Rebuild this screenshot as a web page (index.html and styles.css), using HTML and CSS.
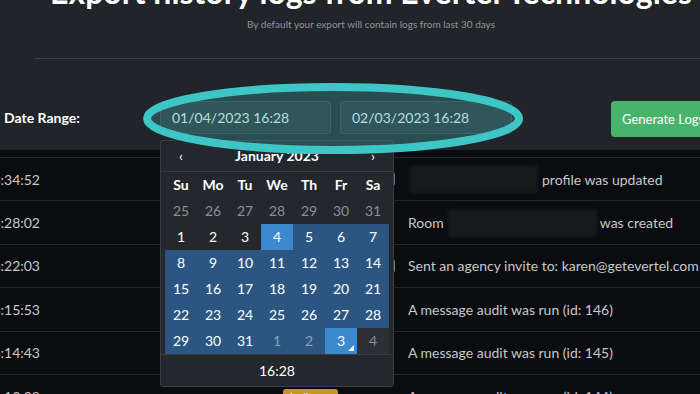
FILE: index.html
```html
<!DOCTYPE html>
<html lang="en">
<head>
    <meta charset="UTF-8">
    <meta name="viewport" content="width=device-width, initial-scale=1.0">
    <title>Export History Logs</title>
    <link rel="stylesheet" href="styles.css">
</head>
<body>
    <div class="page">
        <header class="top">
            <div class="intro">
                <h1>Export history logs from Evertel Technologies</h1>
                <p class="subtitle">By default your export will contain logs from last 30 days</p>
            </div>
            <div class="range-row">
                <span class="range-label">Date Range:</span>
                <div class="date-input">01/04/2023 16:28</div>
                <div class="date-input date-end">02/03/2023 16:28</div>
                <button class="generate">Generate Logs</button>
            </div>
        </header>

        <div class="logs">
            <div class="log-row">
                <div class="log-time"><span>16:34:52</span></div>
                <div class="log-type"><span class="badge badge-wide badge-grey">Profile updated</span></div>
                <div class="log-text"><span class="blur blur-name"></span>profile was updated</div>
            </div>
            <div class="log-row">
                <div class="log-time"><span>16:28:02</span></div>
                <div class="log-type"><span class="badge badge-grey">Room</span></div>
                <div class="log-text">Room<span class="blur blur-room"></span>was created</div>
            </div>
            <div class="log-row">
                <div class="log-time"><span>16:22:03</span></div>
                <div class="log-type"><span class="badge badge-wide badge-green">Agency invite sent</span></div>
                <div class="log-text">Sent an agency invite to: karen@getevertel.com</div>
            </div>
            <div class="log-row">
                <div class="log-time"><span>16:15:53</span></div>
                <div class="log-type"><span class="badge badge-gold">Audit</span></div>
                <div class="log-text">A message audit was run (id: 146)</div>
            </div>
            <div class="log-row">
                <div class="log-time"><span>16:14:43</span></div>
                <div class="log-type"><span class="badge badge-gold">Audit</span></div>
                <div class="log-text">A message audit was run (id: 145)</div>
            </div>
            <div class="log-row">
                <div class="log-time"><span>16:13:08</span></div>
                <div class="log-type"><span class="badge badge-gold">Audit</span></div>
                <div class="log-text">A message audit was run (id: 144)</div>
            </div>
        </div>

        <!-- date range picker, open on the start date -->
        <div class="picker">
            <div class="cal-grid picker-head">
                <span>&lsaquo;</span>
                <span class="month">January 2023</span>
                <span>&rsaquo;</span>
            </div>
            <div class="cal-grid">
                <span class="dow">Su</span><span class="dow">Mo</span><span class="dow">Tu</span><span class="dow">We</span><span class="dow">Th</span><span class="dow">Fr</span><span class="dow">Sa</span>

                <span class="day other">25</span><span class="day other">26</span><span class="day other">27</span><span class="day other">28</span><span class="day other">29</span><span class="day other">30</span><span class="day other">31</span>

                <span class="day">1</span><span class="day">2</span><span class="day">3</span><span class="day edge">4</span><span class="day in-range">5</span><span class="day in-range">6</span><span class="day in-range">7</span>

                <span class="day in-range">8</span><span class="day in-range">9</span><span class="day in-range">10</span><span class="day in-range">11</span><span class="day in-range">12</span><span class="day in-range">13</span><span class="day in-range">14</span>

                <span class="day in-range">15</span><span class="day in-range">16</span><span class="day in-range">17</span><span class="day in-range">18</span><span class="day in-range">19</span><span class="day in-range">20</span><span class="day in-range">21</span>

                <span class="day in-range">22</span><span class="day in-range">23</span><span class="day in-range">24</span><span class="day in-range">25</span><span class="day in-range">26</span><span class="day in-range">27</span><span class="day in-range">28</span>

                <span class="day in-range">29</span><span class="day in-range">30</span><span class="day in-range">31</span><span class="day in-range other">1</span><span class="day in-range other">2</span><span class="day edge end">3</span><span class="day other hover">4</span>
            </div>
            <div class="picker-time">16:28</div>
        </div>

        <svg class="highlight" width="380" height="71" viewBox="0 0 380 71">
            <ellipse cx="190" cy="35.5" rx="186" ry="31.5" fill="rgba(60,196,196,0.26)" stroke="#3ec6c6" stroke-width="8"/>
        </svg>
    </div>
</body>
</html>
```

FILE: styles.css
```css
body {
    margin: 0;
    background-color: #0b0c10;
    font-family: Lato, "Open Sans", sans-serif;
}

.page {
    position: relative;
    width: 700px;
    height: 394px;
    overflow: hidden;
}

.top {
    height: 150px;
    background-color: #212529;
    overflow: hidden;
}

.intro {
    margin: 0 0 0 35px;
    border-bottom: 1px solid #3a3f45;
    text-align: center;
}

h1 {
    margin: -24px -7px 0 0;
    font-size: 32px;
    line-height: 32px;
    font-weight: 700;
    color: #fff;
    white-space: nowrap;
}

.subtitle {
    margin: 10px -7px 0 0;
    padding-bottom: 28px;
    font-size: 10px;
    line-height: 12px;
    color: #8e949a;
}

.range-row {
    display: flex;
    align-items: flex-start;
    margin-top: 42px;
    padding-left: 4px;
}

.range-label {
    flex-shrink: 0;
    width: 156px;
    line-height: 33px;
    font-size: 14px;
    font-weight: 700;
    color: #fff;
}

.date-input {
    flex-shrink: 0;
    box-sizing: border-box;
    width: 171px;
    height: 33px;
    margin-right: 9px;
    padding: 0 11px;
    border: 1px solid #3c4248;
    border-radius: 3px;
    background-color: #2b3035;
    color: #dfe2e5;
    font-size: 14px;
    line-height: 31px;
}

.date-end {
    width: 172px;
}

.generate {
    flex-shrink: 0;
    height: 36px;
    margin-left: 90px;
    padding: 0 11px;
    border: none;
    border-radius: 4px;
    background-color: #48b46b;
    color: #fff;
    font-family: Lato, sans-serif;
    font-size: 13px;
    white-space: nowrap;
}

.logs {
    padding-top: 7px;
}

.log-row {
    display: flex;
    align-items: center;
    box-sizing: border-box;
    height: 43.4px;
    border-top: 1px solid #25282d;
    font-size: 14px;
    color: #c6c8cb;
}

.log-time {
    flex-shrink: 0;
    display: flex;
    justify-content: flex-end;
    width: 40px;
    white-space: nowrap;
}

.log-type {
    flex-shrink: 0;
    box-sizing: border-box;
    width: 355px;
    padding-left: 243px;
    display: flex;
}

.badge {
    box-sizing: border-box;
    width: 55px;
    height: 14px;
    padding: 0 5px;
    border-radius: 3px;
    font-size: 10px;
    line-height: 14px;
    color: #fff;
    white-space: nowrap;
    overflow: hidden;
}

.badge-wide {
    width: 115px;
    text-align: right;
}

.badge-grey {
    background-color: #587a7c;
}

.badge-green {
    background-color: #6a8a78;
}

.badge-gold {
    background-color: #c4962a;
}

.log-text {
    display: flex;
    align-items: center;
    padding-left: 13px;
    white-space: nowrap;
}

.blur {
    display: inline-block;
    height: 28px;
    border-radius: 3px;
    background-color: #17191d;
    filter: blur(1.5px);
}

.blur-name {
    width: 128px;
    margin: 0 4px 0 2px;
}

.blur-room {
    width: 149px;
    margin: 0 3px 0 4px;
}

/* date picker popup */
.picker {
    position: absolute;
    left: 160px;
    top: 140px;
    box-sizing: border-box;
    width: 234px;
    border: 1px solid #3a3d42;
    border-radius: 3px;
    background-color: #24272b;
    color: #fff;
    font-size: 14px;
}

.cal-grid {
    display: grid;
    grid-template-columns: repeat(7, 32px);
    padding: 0 4px;
}

.picker-head {
    height: 30px;
    border-bottom: 1px solid #393c41;
    line-height: 30px;
    text-align: center;
}

.month {
    grid-column: span 5;
    font-weight: 700;
}

.dow,
.day {
    position: relative;
    height: 26px;
    line-height: 26px;
    text-align: center;
}

.dow {
    font-weight: 700;
}

.day.other {
    color: #8b9096;
}

.day.in-range {
    background-color: #2b5682;
}

.day.in-range.other {
    color: #8ea3ba;
}

.day.edge {
    background-color: #3e88cd;
}

.day.hover {
    background-color: #2c2f33;
}

.day.end::after {
    content: "";
    position: absolute;
    right: 3px;
    bottom: 3px;
    border-left: 6px solid transparent;
    border-bottom: 6px solid #fff;
}

.picker-time {
    height: 31px;
    border-top: 1px solid #393c41;
    line-height: 31px;
    text-align: center;
}

.highlight {
    position: absolute;
    left: 143px;
    top: 83px;
}
```
